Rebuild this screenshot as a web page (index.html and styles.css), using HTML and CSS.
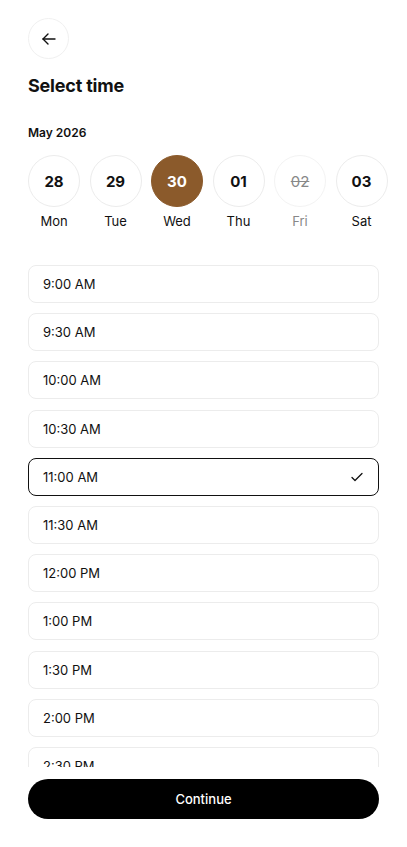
FILE: index.html
```html
<!DOCTYPE html>
<html lang="en">
<head>
    <meta charset="UTF-8">
    <meta name="viewport" content="width=device-width, initial-scale=1.0">
    <title>Select time</title>
    <link rel="stylesheet" href="styles.css">
</head>
<body>
    <div class="screen">
        <div class="header">
            <button class="back-btn" aria-label="Back">
                <svg width="16" height="16" viewBox="0 0 16 16" fill="none" stroke="#111" stroke-width="1.4" stroke-linecap="round" stroke-linejoin="round">
                    <path d="M14 8H2"/>
                    <path d="M7 3L2 8l5 5"/>
                </svg>
            </button>
            <h1>Select time</h1>
            <div class="month">May 2026</div>
        </div>

        <div class="dates">
            <div class="day">
                <div class="day-num">28</div>
                <div class="day-name">Mon</div>
            </div>
            <div class="day">
                <div class="day-num">29</div>
                <div class="day-name">Tue</div>
            </div>
            <div class="day active">
                <div class="day-num">30</div>
                <div class="day-name">Wed</div>
            </div>
            <div class="day">
                <div class="day-num">01</div>
                <div class="day-name">Thu</div>
            </div>
            <div class="day disabled">
                <div class="day-num">02</div>
                <div class="day-name">Fri</div>
            </div>
            <div class="day">
                <div class="day-num">03</div>
                <div class="day-name">Sat</div>
            </div>
        </div>

        <div class="slots">
            <div class="slot">9:00 AM</div>
            <div class="slot">9:30 AM</div>
            <div class="slot">10:00 AM</div>
            <div class="slot">10:30 AM</div>
            <div class="slot selected">
                <span>11:00 AM</span>
                <svg width="14" height="14" viewBox="0 0 14 14" fill="none" stroke="#111" stroke-width="1.3" stroke-linecap="round" stroke-linejoin="round">
                    <path d="M2 7.5l3 3L12 3.5"/>
                </svg>
            </div>
            <div class="slot">11:30 AM</div>
            <div class="slot">12:00 PM</div>
            <div class="slot">1:00 PM</div>
            <div class="slot">1:30 PM</div>
            <div class="slot">2:00 PM</div>
            <div class="slot">2:30 PM</div>
            <div class="slot">3:00 PM</div>
        </div>

        <div class="footer">
            <button class="continue-btn">Continue</button>
        </div>
    </div>
</body>
</html>
```

FILE: styles.css
```css
body {
    margin: 0;
    font-family: Inter, "Noto Sans", Arial, sans-serif;
    background: #fff;
    color: #111;
}
.screen {
    height: 847px;
    display: flex;
    flex-direction: column;
    overflow: hidden;
}
.header {
    padding: 18px 28px 0;
}
.back-btn {
    width: 41px;
    height: 41px;
    border-radius: 50%;
    border: 1px solid #f0f0f0;
    background: #fff;
    display: flex;
    align-items: center;
    justify-content: center;
    padding: 0;
}
.header h1 {
    margin: 15px 0 0;
    font-size: 18px;
    line-height: 24px;
    font-weight: 700;
    letter-spacing: -0.2px;
}
.month {
    margin-top: 27px;
    font-size: 12px;
    line-height: 16px;
    font-weight: 600;
}
.dates {
    display: flex;
    gap: 9.5px;
    padding: 14px 28px 0;
}
.day {
    flex: 0 0 52px;
    display: flex;
    flex-direction: column;
    align-items: center;
}
.day-num {
    width: 52px;
    height: 52px;
    box-sizing: border-box;
    border: 1px solid #ececec;
    border-radius: 50%;
    display: flex;
    align-items: center;
    justify-content: center;
    font-size: 15px;
    font-weight: 700;
}
.day-name {
    margin-top: 5px;
    font-size: 13px;
    line-height: 18px;
}
.day.active .day-num {
    background: #8b5a2b;
    border-color: #8b5a2b;
    color: #fff;
}
.day.disabled .day-num {
    border-color: #f3f3f3;
    color: #888;
    font-weight: 400;
    text-decoration: line-through;
}
.day.disabled .day-name {
    color: #888;
}
.slots {
    flex: 1;
    overflow: hidden;
    margin-top: 35px;
    padding: 0 28px;
    display: flex;
    flex-direction: column;
    gap: 10.2px;
}
.slot {
    flex: 0 0 38px;
    box-sizing: border-box;
    border: 1px solid #ececec;
    border-radius: 8px;
    padding: 0 14px;
    display: flex;
    align-items: center;
    justify-content: space-between;
    font-size: 13px;
    font-weight: 400;
}
.slot.selected {
    border: 1.5px solid #111;
}
.footer {
    padding: 12px 28px 28px;
}
.continue-btn {
    width: 100%;
    height: 40px;
    border: none;
    border-radius: 20px;
    background: #000;
    color: #fff;
    font-family: inherit;
    font-size: 13px;
    font-weight: 500;
}
```
